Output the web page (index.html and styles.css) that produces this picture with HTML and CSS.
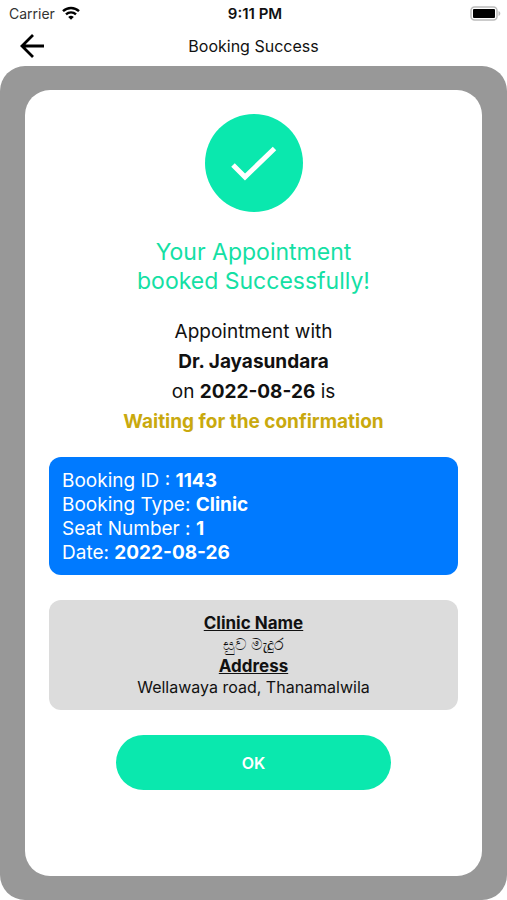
FILE: index.html
```html
<!DOCTYPE html>
<html lang="en">
<head>
  <meta charset="UTF-8" />
  <meta name="viewport" content="width=device-width, initial-scale=1.0" />
  <title>Booking Success</title>
  <link rel="stylesheet" href="styles.css">
</head>
<body>
  <div class="status-bar">
    <div class="carrier">
      <span>Carrier</span>
      <svg width="18" height="14" viewBox="0 0 18 14" fill="none" stroke="#000" stroke-width="2.4">
        <path d="M1 5.2a11.5 11.5 0 0 1 16 0" />
        <path d="M4 8.4a7.2 7.2 0 0 1 10 0" />
        <path d="M9 13.8L6.2 11a4 4 0 0 1 5.6 0z" fill="#000" stroke="none" />
      </svg>
    </div>
    <span class="time">9:11 PM</span>
    <div class="battery">
      <svg width="31" height="15" viewBox="0 0 31 15">
        <rect x="1" y="1" width="26" height="13" rx="3.5" fill="#fff" stroke="#bbb" stroke-width="1.5" />
        <rect x="3" y="3" width="22" height="9" rx="1" fill="#000" />
        <path d="M28.5 5c2.4 1 2.4 4 0 5z" fill="#bbb" />
      </svg>
    </div>
  </div>

  <header class="nav">
    <button type="button" class="back" aria-label="Back">
      <svg width="26" height="26" viewBox="0 0 26 26" fill="none" stroke="#000" stroke-width="2.8">
        <path d="M25 13H3M14 2L3 13l11 11" />
      </svg>
    </button>
    <h1>Booking Success</h1>
  </header>

  <main class="backdrop">
    <section class="card">
      <div class="check">
        <svg width="46" height="36" viewBox="0 0 46 36" fill="none" stroke="#fff" stroke-width="5">
          <path d="M2 20l12 12L43.500 3.500" />
        </svg>
      </div>
      <h2>Your Appointment<br>booked Successfully!</h2>
      <p class="message">
        Appointment with<br>
        <b>Dr. Jayasundara</b><br>
        on <b>2022-08-26</b> is<br>
        <b class="waiting">Waiting for the confirmation</b>
      </p>
      <div class="booking">
        <div>Booking ID : <b>1143</b></div>
        <div>Booking Type: <b>Clinic</b></div>
        <div>Seat Number : <b>1</b></div>
        <div>Date: <b>2022-08-26</b></div>
      </div>
      <div class="clinic">
        <h3>Clinic Name</h3>
        <p lang="si">සුව මැදුර</p>
        <h3>Address</h3>
        <p>Wellawaya road, Thanamalwila</p>
      </div>
      <button type="button" class="ok">OK</button>
    </section>
  </main>
</body>
</html>
```

FILE: styles.css
```css
* {
  box-sizing: border-box;
}
body {
  margin: 0;
  min-height: 100vh;
  display: flex;
  flex-direction: column;
  background: #fff;
  color: #111;
  font-family: Inter, "Noto Sans", sans-serif;
}
h1, h2, h3, p {
  margin: 0;
}
svg {
  display: block;
}
.status-bar {
  display: grid;
  grid-template-columns: 1fr auto 1fr;
  align-items: center;
  height: 26px;
  padding: 0 6px 0 9px;
  font-size: 14px;
}
.carrier {
  display: flex;
  align-items: center;
  gap: 7px;
  color: #333;
}
.time {
  font-size: 15px;
  font-weight: 600;
}
.battery {
  display: flex;
  justify-content: flex-end;
}
.nav {
  display: grid;
  grid-template-columns: 1fr auto 1fr;
  align-items: center;
  height: 40px;
  padding: 0 19px;
}
.nav h1 {
  font-size: 16px;
  font-weight: 400;
}
.back {
  justify-self: start;
  padding: 0;
  border: 0;
  background: none;
}
.backdrop {
  flex: 1;
  display: flex;
  padding: 24px 25px;
  border-radius: 25px;
  background: #989898;
}
.card {
  flex: 1;
  padding: 24px;
  border-radius: 25px;
  background: #fff;
  text-align: center;
}
.check {
  display: flex;
  align-items: center;
  justify-content: center;
  width: 98px;
  height: 98px;
  margin: 0 auto 26px;
  border-radius: 50%;
  background: #0ae8ae;
}
.card h2 {
  margin-bottom: 21px;
  color: #14e0a4;
  font-size: 23px;
  font-weight: 400;
  line-height: 29px;
}
.message {
  margin-bottom: 20px;
  font-size: 19px;
  line-height: 30px;
}
.waiting {
  color: #c9a90e;
}
.booking {
  margin-bottom: 25px;
  padding: 12px 13px 10px;
  border-radius: 12px;
  background: #007aff;
  color: #fff;
  font-size: 19px;
  line-height: 24px;
  text-align: left;
}
.clinic {
  margin-bottom: 25px;
  padding: 12px;
  border-radius: 12px;
  background: #dcdcdc;
  font-size: 16px;
  line-height: 21px;
}
.clinic h3 {
  font-size: 17px;
  line-height: 22px;
  text-decoration: underline;
}
.ok {
  width: 67%;
  height: 55px;
  border: 0;
  border-radius: 28px;
  background: #0ae8ae;
  color: #fff;
  font: 600 16px Inter, sans-serif;
}
```
